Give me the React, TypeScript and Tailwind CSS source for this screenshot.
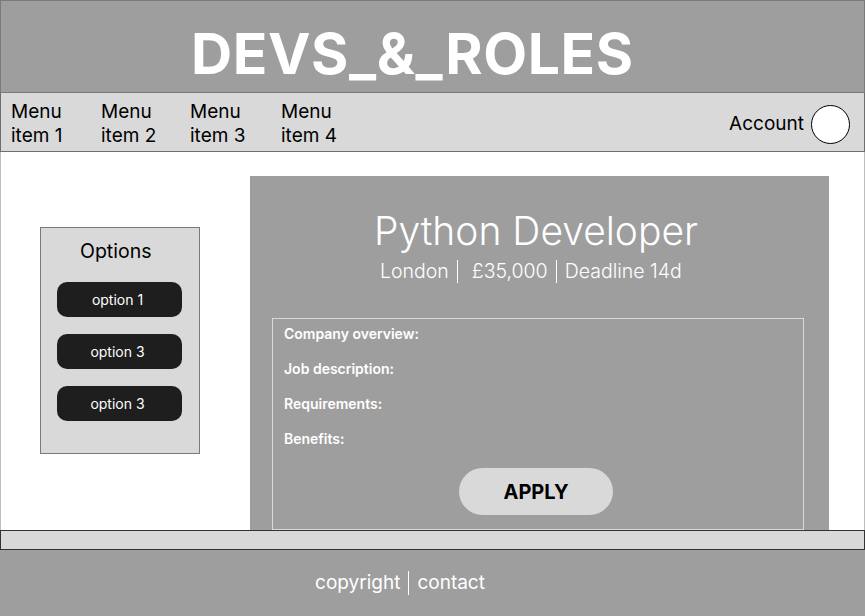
export default function App() {
  const menu = ["item 1", "item 2", "item 3", "item 4"];
  const menuW = ["w-[90px]", "w-[89px]", "w-[91px]", "w-[90px]"];
  const sections = ["Company overview:", "Job description:", "Requirements:", "Benefits:"];

  return (
    <div className="flex h-[616px] w-[865px] flex-col overflow-hidden bg-white font-['Inter',sans-serif]">
      {/* Header */}
      <header className="flex h-[93px] shrink-0 items-center border border-[#7a7a7a] bg-[#9e9e9e] pl-[190px] pt-[14px]">
        <h1 className="text-[57px] leading-none font-bold tracking-[0.01em] text-white">DEVS_&amp;_ROLES</h1>
      </header>

      {/* Nav */}
      <nav className="flex h-[59px] shrink-0 items-center border border-t-0 border-[#6e6e6e] bg-[#d9d9d9] pl-[10px] pr-[14px] pt-[4px]">
        {menu.map((m, i) => (
          <div key={m} className={`${menuW[i]} text-[19px] leading-[24px] text-black`}>
            Menu
            <br />
            {m}
          </div>
        ))}
        <div className="ml-auto flex items-center gap-[7px]">
          <span className="text-[19px] text-black">Account</span>
          <div className="h-[39px] w-[39px] rounded-full border border-black bg-white" />
        </div>
      </nav>

      {/* Main */}
      <main className="flex h-[378px] shrink-0 border-x border-[#bdbdbd]">
        <aside className="ml-[39px] mt-[75px] flex h-[227px] w-[160px] flex-col border border-[#7a7a7a] bg-[#d9d9d9]">
          <h2 className="ml-[39px] mt-[11px] text-[19.5px] leading-[24px] text-black">Options</h2>
          <div className="ml-[16px] mt-[19px] flex flex-col gap-[17px]">
            {["option 1", "option 3", "option 3"].map((o, i) => (
              <button
                key={i}
                className="flex h-[35px] w-[125px] items-center justify-center rounded-[10px] bg-[#1e1e1e] pr-[4px] text-[14px] text-white"
              >
                {o}
              </button>
            ))}
          </div>
        </aside>

        <section className="ml-[50px] mt-[24px] flex w-[579px] flex-col bg-[#9e9e9e]">
          <h2 className="ml-[124px] mt-[32px] text-[39px] leading-[46px] font-light text-white">Python Developer</h2>
          <div className="ml-[130px] mt-[4px] flex items-center text-[19.5px] leading-[26px] font-light text-white">
            <span>London</span>
            <span className="ml-[8px] h-[23px] border-l border-white" />
            <span className="ml-[14px]">£35,000</span>
            <span className="ml-[8px] h-[23px] border-l border-white" />
            <span className="ml-[8px]">Deadline 14d</span>
          </div>

          <div className="ml-[22px] mt-[34px] flex w-[532px] flex-1 flex-col border border-[#d9d9d9] pl-[11px]">
            <div className="mt-[6px] flex flex-col gap-[17px]">
              {sections.map((s) => (
                <p key={s} className="text-[14px] leading-[18px] font-semibold text-white">
                  {s}
                </p>
              ))}
            </div>
            <button className="ml-[175px] mt-[20px] h-[47px] w-[154px] rounded-full bg-[#d9d9d9] text-[20px] font-bold text-black">
              APPLY
            </button>
          </div>
        </section>
      </main>

      {/* Footer */}
      <div className="h-[20px] shrink-0 border border-[#333] bg-[#d9d9d9]" />
      <footer className="flex flex-1 items-center justify-center bg-[#9e9e9e] pr-[65px] text-[19px] text-white">
        <span>copyright</span>
        <span className="mx-[8px] h-[24px] border-l border-white" />
        <span>contact</span>
      </footer>
    </div>
  );
}
